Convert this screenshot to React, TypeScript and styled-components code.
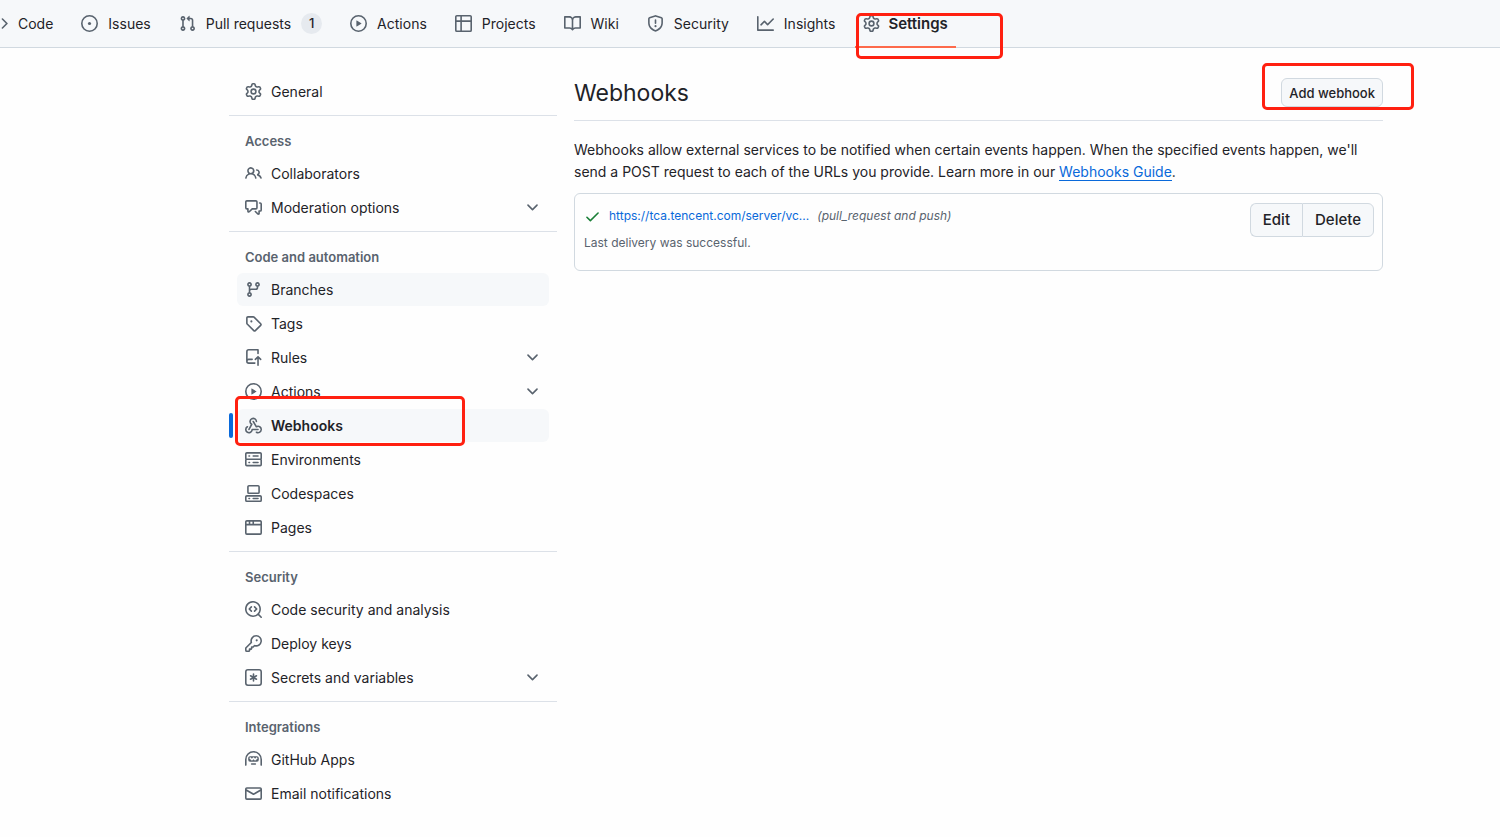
import React from 'react';
import styled, { createGlobalStyle, css } from 'styled-components';

const color = {
  page: '#fefefe',
  subtle: '#f6f8fa',
  text: '#1f2328',
  muted: '#59636e',
  border: '#d1d9e0',
  divider: '#dce1e8',
  link: '#0969da',
  success: '#1a7f37',
  underline: '#fd6a4b',
  highlight: '#ff2010',
};

const GlobalStyle = createGlobalStyle`
  *, *::before, *::after { box-sizing: border-box; }
  body {
    margin: 0;
    background: ${color.page};
    color: ${color.text};
    font-family: Inter, "Liberation Sans", sans-serif;
    font-size: 14px;
    line-height: 22px;
  }
  a { color: inherit; text-decoration: none; }
  ul { list-style: none; margin: 0; padding: 0; }
`;

const paths = {
  code: ['m11.28 3.22 4.25 4.25a.75.75 0 0 1 0 1.06l-4.25 4.25a.749.749 0 0 1-1.275-.326.749.749 0 0 1 .215-.734L13.94 8l-3.72-3.72a.749.749 0 0 1 .326-1.275.749.749 0 0 1 .734.215Zm-6.56 0a.751.751 0 0 1 1.042.018.751.751 0 0 1 .018 1.042L2.06 8l3.72 3.72a.749.749 0 0 1-.326 1.275.749.749 0 0 1-.734-.215L.47 8.53a.75.75 0 0 1 0-1.06Z'],
  issue: ['M8 9.5a1.5 1.5 0 1 0 0-3 1.5 1.5 0 0 0 0 3Z', 'M8 0a8 8 0 1 1 0 16A8 8 0 0 1 8 0ZM1.5 8a6.5 6.5 0 1 0 13 0 6.5 6.5 0 0 0-13 0Z'],
  pull: ['M1.5 3.25a2.25 2.25 0 1 1 3 2.122v5.256a2.251 2.251 0 1 1-1.5 0V5.372A2.25 2.25 0 0 1 1.5 3.25Zm5.677-.177L9.573.677A.25.25 0 0 1 10 .854V2.5h1A2.5 2.5 0 0 1 13.5 5v5.628a2.251 2.251 0 1 1-1.5 0V5a1 1 0 0 0-1-1h-1v1.646a.25.25 0 0 1-.427.177L7.177 3.427a.25.25 0 0 1 0-.354ZM3.75 2.5a.75.75 0 1 0 0 1.5.75.75 0 0 0 0-1.5Zm0 9.5a.75.75 0 1 0 0 1.5.75.75 0 0 0 0-1.5Zm8.25.75a.75.75 0 1 0 1.5 0 .75.75 0 0 0-1.5 0Z'],
  play: ['M8 0a8 8 0 1 1 0 16A8 8 0 0 1 8 0ZM1.5 8a6.5 6.5 0 1 0 13 0 6.5 6.5 0 0 0-13 0Zm4.879-2.773 4.264 2.559a.25.25 0 0 1 0 .428l-4.264 2.559A.25.25 0 0 1 6 10.559V5.442a.25.25 0 0 1 .379-.215Z'],
  table: ['M0 1.75C0 .784.784 0 1.75 0h12.5C15.216 0 16 .784 16 1.75v12.5A1.75 1.75 0 0 1 14.25 16H1.75A1.75 1.75 0 0 1 0 14.25ZM6.5 6.5v8h7.75a.25.25 0 0 0 .25-.25V6.5Zm8-1.5V1.75a.25.25 0 0 0-.25-.25H6.5V5Zm-13 1.5v7.75c0 .138.112.25.25.25H5v-8ZM5 5V1.5H1.75a.25.25 0 0 0-.25.25V5Z'],
  book: ['M0 1.75A.75.75 0 0 1 .75 1h4.253c1.227 0 2.317.59 3 1.501A3.743 3.743 0 0 1 11.006 1h4.245a.75.75 0 0 1 .75.75v10.5a.75.75 0 0 1-.75.75h-4.507a2.25 2.25 0 0 0-1.591.659l-.622.621a.75.75 0 0 1-1.06 0l-.622-.621A2.25 2.25 0 0 0 5.258 13H.75a.75.75 0 0 1-.75-.75Zm7.251 10.324.004-5.073-.002-2.253A2.25 2.25 0 0 0 5.003 2.5H1.5v9h3.757a3.75 3.75 0 0 1 1.994.574ZM8.755 4.75l-.004 7.322a3.752 3.752 0 0 1 1.992-.572H14.5v-9h-3.495a2.25 2.25 0 0 0-2.25 2.25Z'],
  shield: ['M7.467.133a1.748 1.748 0 0 1 1.066 0l5.25 1.68A1.75 1.75 0 0 1 15 3.48V7c0 1.566-.32 3.182-1.303 4.682-.983 1.498-2.585 2.813-5.032 3.855a1.697 1.697 0 0 1-1.33 0c-2.447-1.042-4.049-2.357-5.032-3.855C1.32 10.182 1 8.566 1 7V3.48a1.75 1.75 0 0 1 1.217-1.667Zm.61 1.429a.25.25 0 0 0-.153 0l-5.25 1.68a.25.25 0 0 0-.174.238V7c0 1.358.275 2.666 1.057 3.86.784 1.194 2.121 2.34 4.366 3.297a.196.196 0 0 0 .154 0c2.245-.956 3.582-2.104 4.366-3.298C13.225 9.666 13.5 8.36 13.5 7V3.48a.251.251 0 0 0-.174-.237l-5.25-1.68ZM8.75 4.75v3a.75.75 0 0 1-1.5 0v-3a.75.75 0 0 1 1.5 0ZM9 10.5a1 1 0 1 1-2 0 1 1 0 0 1 2 0Z'],
  graph: ['M1.5 1.75V13.5h13.75a.75.75 0 0 1 0 1.5H.75a.75.75 0 0 1-.75-.75V1.75a.75.75 0 0 1 1.5 0Zm14.28 2.53-5.25 5.25a.75.75 0 0 1-1.06 0L7 7.06 4.28 9.78a.751.751 0 0 1-1.042-.018.751.751 0 0 1-.018-1.042l3.25-3.25a.75.75 0 0 1 1.06 0L10 7.94l4.72-4.72a.751.751 0 0 1 1.042.018.751.751 0 0 1 .018 1.042Z'],
  gear: ['M8 0a8.2 8.2 0 0 1 .701.031C9.444.095 9.99.645 10.16 1.29l.288 1.107c.018.066.079.158.212.224.231.114.454.243.668.386.123.082.233.09.299.071l1.103-.303c.644-.176 1.392.021 1.82.63.27.385.506.792.704 1.218.315.675.111 1.422-.364 1.891l-.814.806c-.049.048-.098.147-.088.294.016.257.016.515 0 .772-.01.147.038.246.088.294l.814.806c.475.469.679 1.216.364 1.891a7.977 7.977 0 0 1-.704 1.217c-.428.61-1.176.807-1.82.63l-1.102-.302c-.067-.019-.177-.011-.3.071a5.909 5.909 0 0 1-.668.386c-.133.066-.194.158-.211.224l-.29 1.106c-.168.646-.715 1.196-1.458 1.26a8.006 8.006 0 0 1-1.402 0c-.743-.064-1.289-.614-1.458-1.26l-.289-1.106c-.018-.066-.079-.158-.212-.224a5.738 5.738 0 0 1-.668-.386c-.123-.082-.233-.09-.299-.071l-1.103.303c-.644.176-1.392-.021-1.82-.63a8.12 8.12 0 0 1-.704-1.218c-.315-.675-.111-1.422.363-1.891l.815-.806c.05-.048.098-.147.088-.294a6.214 6.214 0 0 1 0-.772c.01-.147-.038-.246-.088-.294l-.815-.806C.635 6.045.431 5.298.746 4.623a7.92 7.92 0 0 1 .704-1.217c.428-.61 1.176-.807 1.82-.63l1.102.302c.067.019.177.011.3-.071.214-.143.437-.272.668-.386.133-.066.194-.158.211-.224l.29-1.106C6.009.645 6.556.095 7.299.03 7.53.01 7.764 0 8 0Zm-.571 1.525c-.036.003-.108.036-.137.146l-.289 1.105c-.147.561-.549.967-.998 1.189-.173.086-.34.183-.5.29-.417.278-.97.423-1.529.27l-1.103-.303c-.109-.03-.175.016-.195.045-.22.312-.412.644-.573.99-.014.031-.021.11.059.19l.815.806c.411.406.562.957.53 1.456a4.709 4.709 0 0 0 0 .582c.032.499-.119 1.05-.53 1.456l-.815.806c-.081.08-.073.159-.059.19.162.346.353.677.573.989.02.03.085.076.195.046l1.102-.303c.56-.153 1.113-.008 1.53.27.161.107.328.204.501.29.447.222.85.629.997 1.189l.289 1.105c.029.109.101.143.137.146a6.6 6.6 0 0 0 1.142 0c.036-.003.108-.036.137-.146l.289-1.105c.147-.561.549-.967.998-1.189.173-.086.34-.183.5-.29.417-.278.97-.423 1.529-.27l1.103.303c.109.029.175-.016.195-.045.22-.313.411-.644.573-.99.014-.031.021-.11-.059-.19l-.815-.806c-.411-.406-.562-.957-.53-1.456a4.709 4.709 0 0 0 0-.582c-.032-.499.119-1.05.53-1.456l.815-.806c.081-.08.073-.159.059-.19a6.464 6.464 0 0 0-.573-.989c-.02-.03-.085-.076-.195-.046l-1.102.303c-.56.153-1.113.008-1.53-.27a4.44 4.44 0 0 0-.501-.29c-.447-.222-.85-.629-.997-1.189l-.289-1.105c-.029-.11-.101-.143-.137-.146a6.6 6.6 0 0 0-1.142 0ZM11 8a3 3 0 1 1-6 0 3 3 0 0 1 6 0ZM9.5 8a1.5 1.5 0 1 0-3.001.001A1.5 1.5 0 0 0 9.5 8Z'],
  people: ['M2 5.5a3.5 3.5 0 1 1 5.898 2.549 5.508 5.508 0 0 1 3.034 4.084.75.75 0 1 1-1.482.235 4 4 0 0 0-7.9 0 .75.75 0 0 1-1.482-.236A5.507 5.507 0 0 1 3.102 8.05 3.493 3.493 0 0 1 2 5.5ZM11 4a3.001 3.001 0 0 1 2.22 5.018 5.01 5.01 0 0 1 2.56 3.012.749.749 0 0 1-.885.954.752.752 0 0 1-.549-.514 3.507 3.507 0 0 0-2.522-2.372.75.75 0 0 1-.574-.73v-.352a.75.75 0 0 1 .416-.672A1.5 1.5 0 0 0 11 5.5.75.75 0 0 1 11 4Zm-5.5-.5a2 2 0 1 0-.001 3.999A2 2 0 0 0 5.5 3.5Z'],
  discussion: ['M1.75 1h8.5c.966 0 1.75.784 1.75 1.75v5.5A1.75 1.75 0 0 1 10.25 10H7.061l-2.574 2.573A1.458 1.458 0 0 1 2 11.543V10h-.25A1.75 1.75 0 0 1 0 8.25v-5.5C0 1.784.784 1 1.75 1ZM1.5 2.75v5.5c0 .138.112.25.25.25h1a.75.75 0 0 1 .75.75v2.19l2.72-2.72a.749.749 0 0 1 .53-.22h3.5a.25.25 0 0 0 .25-.25v-5.5a.25.25 0 0 0-.25-.25h-8.5a.25.25 0 0 0-.25.25Zm13 2a.25.25 0 0 0-.25-.25h-.5a.75.75 0 0 1 0-1.5h.5c.966 0 1.75.784 1.75 1.75v5.5A1.75 1.75 0 0 1 14.25 12H14v1.543a1.458 1.458 0 0 1-2.487 1.03L9.22 12.28a.749.749 0 0 1 .326-1.275.749.749 0 0 1 .734.215l2.22 2.22v-2.19a.75.75 0 0 1 .75-.75h1a.25.25 0 0 0 .25-.25Z'],
  branch: ['M9.5 3.25a2.25 2.25 0 1 1 3 2.122V6A2.5 2.5 0 0 1 10 8.5H6a1 1 0 0 0-1 1v1.128a2.251 2.251 0 1 1-1.5 0V5.372a2.25 2.25 0 1 1 1.5 0v1.836A2.493 2.493 0 0 1 6 7h4a1 1 0 0 0 1-1v-.628A2.25 2.25 0 0 1 9.5 3.25Zm-6 0a.75.75 0 1 0 1.5 0 .75.75 0 0 0-1.5 0Zm8.25-.75a.75.75 0 1 0 0 1.5.75.75 0 0 0 0-1.5ZM4.25 12a.75.75 0 1 0 0 1.5.75.75 0 0 0 0-1.5Z'],
  tag: ['M1 7.775V2.75C1 1.784 1.784 1 2.75 1h5.025c.464 0 .91.184 1.238.513l6.25 6.25a1.75 1.75 0 0 1 0 2.474l-5.026 5.026a1.75 1.75 0 0 1-2.474 0l-6.25-6.25A1.752 1.752 0 0 1 1 7.775Zm1.5 0c0 .066.026.13.073.177l6.25 6.25a.25.25 0 0 0 .354 0l5.025-5.025a.25.25 0 0 0 0-.354l-6.25-6.25a.25.25 0 0 0-.177-.073H2.75a.25.25 0 0 0-.25.25ZM6 5a1 1 0 1 1 0 2 1 1 0 0 1 0-2Z'],
  repoPush: ['M1 2.5A2.5 2.5 0 0 1 3.5 0h8.75a.75.75 0 0 1 .75.75v3.5a.75.75 0 0 1-1.5 0V1.5h-8a1 1 0 0 0-1 1v6.708A2.493 2.493 0 0 1 3.5 9h3.25a.75.75 0 0 1 0 1.5H3.5a1 1 0 0 0 0 2h5.75a.75.75 0 0 1 0 1.5H3.5A2.5 2.5 0 0 1 1 11.5Zm13.23 7.79h-.001l-1.224-1.224v6.184a.75.75 0 0 1-1.5 0V9.066L10.28 10.29a.75.75 0 0 1-1.06-1.061l2.505-2.504a.75.75 0 0 1 1.06 0L15.29 9.23a.751.751 0 0 1-.018 1.042.751.751 0 0 1-1.042.018Z'],
  webhook: ['M5.5 4.25a2.25 2.25 0 0 1 4.5 0 .75.75 0 0 0 1.5 0 3.75 3.75 0 1 0-6.14 2.889l-2.272 4.258a.75.75 0 0 0 1.324.706L7 7.25a.75.75 0 0 0-.309-1.015A2.25 2.25 0 0 1 5.5 4.25Z', 'M7.364 3.607a.75.75 0 0 1 1.03.257l2.608 4.349a3.75 3.75 0 1 1-.628 6.785.75.75 0 0 1 .752-1.299 2.25 2.25 0 1 0-.033-3.88.75.75 0 0 1-1.03-.256L7.107 4.636a.75.75 0 0 1 .257-1.03Z', 'M2.9 8.776A.75.75 0 0 1 2.625 9.8 2.25 2.25 0 1 0 6 11.75a.75.75 0 0 1 .75-.751h5.5a.75.75 0 0 1 0 1.5H7.425a3.751 3.751 0 1 1-5.55-3.998.75.75 0 0 1 1.024.274Z'],
  server: ['M1.75 1h12.5c.966 0 1.75.784 1.75 1.75v4c0 .372-.116.717-.314 1 .198.283.314.628.314 1v4a1.75 1.75 0 0 1-1.75 1.75H1.75A1.75 1.75 0 0 1 0 12.75v-4c0-.358.109-.707.314-1a1.739 1.739 0 0 1-.314-1v-4C0 1.784.784 1 1.75 1ZM1.5 2.75v4c0 .138.112.25.25.25h12.5a.25.25 0 0 0 .25-.25v-4a.25.25 0 0 0-.25-.25H1.75a.25.25 0 0 0-.25.25Zm.25 5.75a.25.25 0 0 0-.25.25v4c0 .138.112.25.25.25h12.5a.25.25 0 0 0 .25-.25v-4a.25.25 0 0 0-.25-.25ZM7 4.75A.75.75 0 0 1 7.75 4h4.5a.75.75 0 0 1 0 1.5h-4.5A.75.75 0 0 1 7 4.75ZM7.75 10h4.5a.75.75 0 0 1 0 1.5h-4.5a.75.75 0 0 1 0-1.5ZM3 4.75A.75.75 0 0 1 3.75 4h.5a.75.75 0 0 1 0 1.5h-.5A.75.75 0 0 1 3 4.75ZM3.75 10h.5a.75.75 0 0 1 0 1.5h-.5a.75.75 0 0 1 0-1.5Z'],
  codespaces: ['M0 11.25c0-.966.784-1.75 1.75-1.75h12.5c.966 0 1.75.784 1.75 1.75v3A1.75 1.75 0 0 1 14.25 16H1.75A1.75 1.75 0 0 1 0 14.25Zm2-9.5C2 .784 2.784 0 3.75 0h8.5C13.216 0 14 .784 14 1.75v5a1.75 1.75 0 0 1-1.75 1.75h-8.5A1.75 1.75 0 0 1 2 6.75Zm1.75-.25a.25.25 0 0 0-.25.25v5c0 .138.112.25.25.25h8.5a.25.25 0 0 0 .25-.25v-5a.25.25 0 0 0-.25-.25Zm-2 9.5a.25.25 0 0 0-.25.25v3c0 .138.112.25.25.25h12.5a.25.25 0 0 0 .25-.25v-3a.25.25 0 0 0-.25-.25Z', 'M7 12.75a.75.75 0 0 1 .75-.75h4.5a.75.75 0 0 1 0 1.5h-4.5a.75.75 0 0 1-.75-.75Zm-4 0a.75.75 0 0 1 .75-.75h.5a.75.75 0 0 1 0 1.5h-.5a.75.75 0 0 1-.75-.75Z'],
  browser: ['M0 2.75C0 1.784.784 1 1.75 1h12.5c.966 0 1.75.784 1.75 1.75v10.5A1.75 1.75 0 0 1 14.25 15H1.75A1.75 1.75 0 0 1 0 13.25ZM14.5 6h-13v7.25c0 .138.112.25.25.25h12.5a.25.25 0 0 0 .25-.25Zm-6-3.5v2h6V2.75a.25.25 0 0 0-.25-.25ZM5 2.5v2h2v-2Zm-3.25 0a.25.25 0 0 0-.25.25V4.5h2v-2Z'],
  codescan: ['M8.47 4.97a.75.75 0 0 0 0 1.06L9.94 7.5 8.47 8.97a.75.75 0 1 0 1.06 1.06l2-2a.75.75 0 0 0 0-1.06l-2-2a.75.75 0 0 0-1.06 0ZM6.53 6.03a.75.75 0 0 0-1.06-1.06l-2 2a.75.75 0 0 0 0 1.06l2 2a.75.75 0 1 0 1.06-1.06L5.06 7.5l1.47-1.47Z', 'M12.246 13.307a7.501 7.501 0 1 1 1.06-1.06l2.474 2.473a.749.749 0 0 1-.326 1.275.749.749 0 0 1-.734-.215ZM1.5 7.5a6.002 6.002 0 0 0 3.608 5.504 6.002 6.002 0 0 0 6.486-1.117.748.748 0 0 1 .292-.293A6 6 0 1 0 1.5 7.5Z'],
  key: ['M10.5 0a5.499 5.499 0 1 1-1.288 10.848l-.932.932a.749.749 0 0 1-.53.22H7v.75a.749.749 0 0 1-.22.53l-.5.5a.749.749 0 0 1-.53.22H5v.75a.749.749 0 0 1-.22.53l-.5.5a.749.749 0 0 1-.53.22h-2A1.75 1.75 0 0 1 0 14.25v-2c0-.199.079-.389.22-.53l4.932-4.932A5.5 5.5 0 0 1 10.5 0Zm-4 5.5c-.001.431.069.86.205 1.269a.75.75 0 0 1-.181.768L1.5 12.56v1.69c0 .138.112.25.25.25h1.69l.06-.06v-1.19a.75.75 0 0 1 .75-.75h1.19l.06-.06v-1.19a.75.75 0 0 1 .75-.75h1.19l1.023-1.025a.75.75 0 0 1 .768-.18A4 4 0 1 0 6.5 5.5ZM11 6a1 1 0 1 1 0-2 1 1 0 0 1 0 2Z'],
  asterisk: ['M0 2.75A2.75 2.75 0 0 1 2.75 0h10.5A2.75 2.75 0 0 1 16 2.75v10.5A2.75 2.75 0 0 1 13.25 16H2.75A2.75 2.75 0 0 1 0 13.25ZM2.75 1.5c-.69 0-1.25.56-1.25 1.25v10.5c0 .69.56 1.25 1.25 1.25h10.5c.69 0 1.25-.56 1.25-1.25V2.75c0-.69-.56-1.25-1.25-1.25Z', 'M8 4a.75.75 0 0 1 .75.75V6.7l1.69-.975a.75.75 0 0 1 .75 1.3L9.5 8l1.69.976a.75.75 0 0 1-.75 1.298L8.75 9.3v1.951a.75.75 0 0 1-1.5 0V9.299l-1.69.976a.75.75 0 0 1-.75-1.3L6.5 8l-1.69-.975a.75.75 0 0 1 .75-1.3l1.69.976V4.75A.75.75 0 0 1 8 4Z'],
  hubot: ['M0 8a8 8 0 1 1 16 0v5.25a.75.75 0 0 1-1.5 0V8a6.5 6.5 0 1 0-13 0v5.25a.75.75 0 0 1-1.5 0Zm5.5 4.25a.75.75 0 0 1 .75-.75h3.5a.75.75 0 0 1 0 1.5h-3.5a.75.75 0 0 1-.75-.75ZM3 6.75C3 5.784 3.784 5 4.75 5h6.5c.966 0 1.75.784 1.75 1.75v1.5A1.75 1.75 0 0 1 11.25 10h-6.5A1.75 1.75 0 0 1 3 8.25Zm1.47-.53a.75.75 0 0 0 0 1.06l1.5 1.5a.75.75 0 0 0 1.06 0L8 7.81l.97.97a.75.75 0 0 0 1.06 0l1.5-1.5a.749.749 0 0 0-.326-1.275.749.749 0 0 0-.734.215l-.97.97-.97-.97a.75.75 0 0 0-1.06 0l-.97.97-.97-.97a.75.75 0 0 0-1.06 0Z'],
  mail: ['M1.75 2h12.5c.966 0 1.75.784 1.75 1.75v8.5A1.75 1.75 0 0 1 14.25 14H1.75A1.75 1.75 0 0 1 0 12.25v-8.5C0 2.784.784 2 1.75 2ZM1.5 12.251c0 .138.112.25.25.25h12.5a.25.25 0 0 0 .25-.25V5.809L8.38 9.397a.75.75 0 0 1-.76 0L1.5 5.809v6.442Zm13-8.181v-.32a.25.25 0 0 0-.25-.25H1.75a.25.25 0 0 0-.25.25v.32L8 7.88Z'],
  chevron: ['M12.78 5.22a.749.749 0 0 1 0 1.06l-4.25 4.25a.749.749 0 0 1-1.06 0L3.22 6.28a.749.749 0 1 1 1.06-1.06L8 8.939l3.72-3.719a.749.749 0 0 1 1.06 0Z'],
  check: ['M13.78 4.22a.75.75 0 0 1 0 1.06l-7.25 7.25a.75.75 0 0 1-1.06 0L2.22 9.28a.751.751 0 0 1 .018-1.042.751.751 0 0 1 1.042-.018L6 10.94l6.72-6.72a.75.75 0 0 1 1.06 0Z'],
};

type IconName = keyof typeof paths;

const IconSvg = styled.svg<{ $tone?: string }>`
  flex: none;
  width: 17px;
  height: 17px;
  fill: ${(p) => p.$tone ?? color.muted};
`;

const Icon = ({ name, tone }: { name: IconName; tone?: string }) => (
  <IconSvg viewBox="0 0 16 16" aria-hidden="true" $tone={tone}>
    {paths[name].map((d) => (
      <path key={d} d={d} />
    ))}
  </IconSvg>
);

/* Red annotation frame drawn over the control it surrounds */
const Highlight = styled.span<{ $inset: string }>`
  position: absolute;
  inset: ${(p) => p.$inset};
  border: 3px solid ${color.highlight};
  border-radius: 5px;
  pointer-events: none;
  z-index: 1;
`;

const RepoNav = styled.nav`
  height: 48px;
  background: ${color.subtle};
  border-bottom: 1px solid ${color.border};
`;

const NavList = styled.ul`
  display: flex;
  gap: 12px;
  height: 100%;
  margin-left: -17px;
`;

const NavItem = styled.li`
  position: relative;
  display: flex;
`;

const NavLink = styled.a<{ $current?: boolean }>`
  display: flex;
  align-items: center;
  gap: 10px;
  padding: 0 8px;
  white-space: nowrap;
  ${(p) =>
    p.$current &&
    css`
      gap: 8px;
      font-size: 15px;
      font-weight: 600;
      box-shadow: inset 0 -1px ${color.underline}, 0 1px ${color.underline};
    `}
`;

const Counter = styled.span`
  min-width: 21px;
  padding: 0 6px;
  border-radius: 11px;
  background: #e6eaef;
  font-size: 13px;
  font-weight: 500;
  line-height: 21px;
  text-align: center;
`;

const Layout = styled.div`
  display: flex;
  gap: 17px;
  padding: 27px 117px 24px 229px;
`;

const Sidebar = styled.nav`
  flex: 0 0 328px;
`;

const Group = styled.section`
  & + & {
    margin-top: 7px;
    border-top: 1px solid ${color.divider};
    padding-top: 15px;
  }
`;

const GroupTitle = styled.h2`
  margin: 0 0 6px;
  padding: 0 16px;
  color: ${color.muted};
  font-size: 13px;
  font-weight: 600;
  line-height: 20px;
`;

const SideList = styled.ul`
  display: flex;
  flex-direction: column;
  gap: 1px;
  padding: 0 8px;
`;

const SideItem = styled.li`
  position: relative;
`;

const SideLink = styled.a<{ $filled?: boolean; $current?: boolean }>`
  display: flex;
  align-items: center;
  gap: 9px;
  height: 33px;
  padding: 0 8px;
  border-radius: 6px;
  background: ${(p) => (p.$filled || p.$current ? color.subtle : 'transparent')};
  font-weight: ${(p) => (p.$current ? 600 : 400)};
  ${(p) =>
    p.$current &&
    css`
      &::before {
        content: '';
        position: absolute;
        left: -8px;
        top: 4px;
        bottom: 4px;
        width: 4px;
        border-radius: 4px;
        background: ${color.link};
      }
    `}
`;

const SideLabel = styled.span`
  flex: 1;
`;

const Main = styled.main`
  flex: 1;
  min-width: 0;
`;

const Header = styled.header`
  display: flex;
  align-items: center;
  justify-content: space-between;
  height: 46px;
  padding-bottom: 10px;
  border-bottom: 1px solid ${color.divider};
`;

const Title = styled.h1`
  margin: 0;
  font-size: 23px;
  font-weight: 400;
  line-height: 36px;
`;

const ActionWrap = styled.div`
  position: relative;
  display: flex;
`;

const Button = styled.button<{ $small?: boolean }>`
  height: ${(p) => (p.$small ? 29 : 34)}px;
  padding: 0 ${(p) => (p.$small ? 7 : 12)}px;
  border: 1px solid ${color.border};
  border-radius: 6px;
  background: ${color.subtle};
  color: ${color.text};
  font: inherit;
  font-size: ${(p) => (p.$small ? 13 : 15)}px;
  font-weight: 500;
`;

const ButtonGroup = styled.div`
  display: flex;
  ${Button}:first-child {
    border-right: 0;
    border-radius: 6px 0 0 6px;
  }
  ${Button}:last-child {
    border-radius: 0 6px 6px 0;
  }
`;

const Intro = styled.p`
  margin: 18px 0 10px;
  a {
    color: ${color.link};
    border-bottom: 1px solid ${color.link};
  }
`;

const HookCard = styled.article`
  display: flex;
  align-items: flex-start;
  justify-content: space-between;
  padding: 9px 8px 16px 9px;
  border: 1px solid ${color.border};
  border-radius: 6px;
  font-size: 12px;
`;

const HookLine = styled.div`
  display: flex;
  align-items: center;
  height: 26px;
`;

const HookLink = styled.a`
  margin: 0 8px;
  color: ${color.link};
`;

const HookEvents = styled.em`
  color: ${color.muted};
`;

const HookStatus = styled.p`
  margin: 3px 0 0;
  color: ${color.muted};
`;

interface NavEntry {
  icon: IconName;
  label: string;
  count?: number;
  current?: boolean;
}

const navEntries: NavEntry[] = [
  { icon: 'code', label: 'Code' },
  { icon: 'issue', label: 'Issues' },
  { icon: 'pull', label: 'Pull requests', count: 1 },
  { icon: 'play', label: 'Actions' },
  { icon: 'table', label: 'Projects' },
  { icon: 'book', label: 'Wiki' },
  { icon: 'shield', label: 'Security' },
  { icon: 'graph', label: 'Insights' },
  { icon: 'gear', label: 'Settings', current: true },
];

interface SideEntry {
  icon: IconName;
  label: string;
  expandable?: boolean;
  filled?: boolean;
  current?: boolean;
}

const sideGroups: { title?: string; items: SideEntry[] }[] = [
  { items: [{ icon: 'gear', label: 'General' }] },
  {
    title: 'Access',
    items: [
      { icon: 'people', label: 'Collaborators' },
      { icon: 'discussion', label: 'Moderation options', expandable: true },
    ],
  },
  {
    title: 'Code and automation',
    items: [
      { icon: 'branch', label: 'Branches', filled: true },
      { icon: 'tag', label: 'Tags' },
      { icon: 'repoPush', label: 'Rules', expandable: true },
      { icon: 'play', label: 'Actions', expandable: true },
      { icon: 'webhook', label: 'Webhooks', current: true },
      { icon: 'server', label: 'Environments' },
      { icon: 'codespaces', label: 'Codespaces' },
      { icon: 'browser', label: 'Pages' },
    ],
  },
  {
    title: 'Security',
    items: [
      { icon: 'codescan', label: 'Code security and analysis' },
      { icon: 'key', label: 'Deploy keys' },
      { icon: 'asterisk', label: 'Secrets and variables', expandable: true },
    ],
  },
  {
    title: 'Integrations',
    items: [
      { icon: 'hubot', label: 'GitHub Apps' },
      { icon: 'mail', label: 'Email notifications' },
    ],
  },
];

export default function App() {
  return (
    <>
      <GlobalStyle />
      <RepoNav aria-label="Repository">
        <NavList>
          {navEntries.map((entry) => (
            <NavItem key={entry.label}>
              <NavLink href="#" $current={entry.current} aria-current={entry.current ? 'page' : undefined}>
                <Icon name={entry.icon} />
                <span>{entry.label}</span>
                {entry.count !== undefined && <Counter>{entry.count}</Counter>}
              </NavLink>
              {entry.current && <Highlight $inset="13px -47px -12px 1px" />}
            </NavItem>
          ))}
        </NavList>
      </RepoNav>
      <Layout>
        <Sidebar aria-label="Settings">
          {sideGroups.map((group, i) => (
            <Group key={group.title ?? i}>
              {group.title && <GroupTitle>{group.title}</GroupTitle>}
              <SideList>
                {group.items.map((item) => (
                  <SideItem key={item.label}>
                    <SideLink
                      href="#"
                      $filled={item.filled}
                      $current={item.current}
                      aria-current={item.current ? 'page' : undefined}
                    >
                      <Icon name={item.icon} />
                      <SideLabel>{item.label}</SideLabel>
                      {item.expandable && <Icon name="chevron" />}
                    </SideLink>
                    {item.current && <Highlight $inset="-13px 84px -4px -2px" />}
                  </SideItem>
                ))}
              </SideList>
            </Group>
          ))}
        </Sidebar>
        <Main>
          <Header>
            <Title>Webhooks</Title>
            <ActionWrap>
              <Button type="button" $small>
                Add webhook
              </Button>
              <Highlight $inset="-15px -31px -3px -19px" />
            </ActionWrap>
          </Header>
          <Intro>
            Webhooks allow external services to be notified when certain events happen. When the specified events
            happen, we'll send a POST request to each of the URLs you provide. Learn more in our{' '}
            <a href="#">Webhooks Guide</a>.
          </Intro>
          <HookCard>
            <div>
              <HookLine>
                <Icon name="check" tone={color.success} />
                <HookLink href="#">https://tca.tencent.com/server/vc...</HookLink>
                <HookEvents>(pull_request and push)</HookEvents>
              </HookLine>
              <HookStatus>Last delivery was successful.</HookStatus>
            </div>
            <ButtonGroup>
              <Button type="button">Edit</Button>
              <Button type="button">Delete</Button>
            </ButtonGroup>
          </HookCard>
        </Main>
      </Layout>
    </>
  );
}
